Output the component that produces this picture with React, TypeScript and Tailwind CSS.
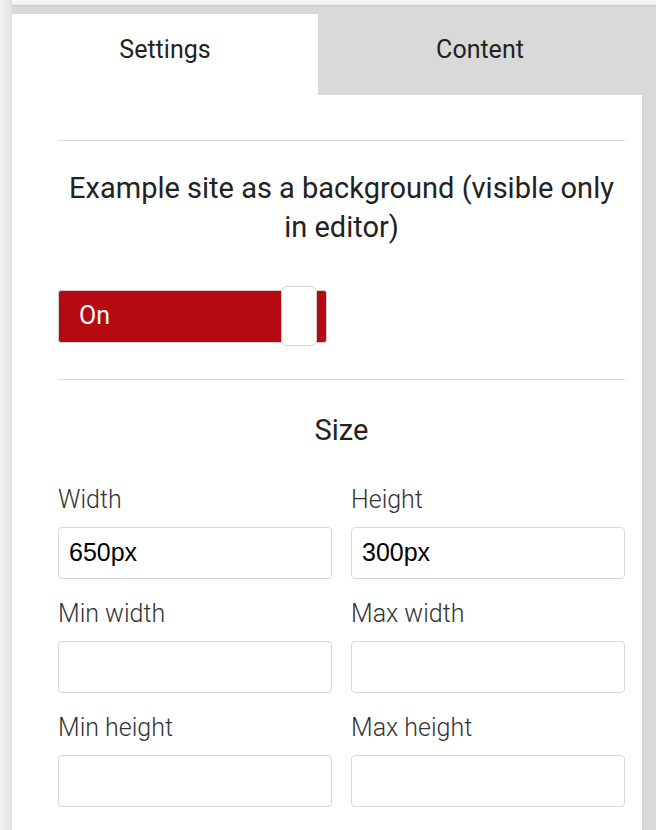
import React from "react";

const roboto = { fontFamily: "Roboto, 'Liberation Sans', sans-serif" };

function Field({ label, value }: { label: string; value?: string }) {
  return (
    <div className="flex flex-col">
      <label className="text-[25px] leading-[30px] text-[#333] font-light">{label}</label>
      <div className="mt-[12px] h-[52px] rounded-[4px] border border-[#d8d8d8] bg-white flex items-center px-[10px]">
        <span className="text-[25px] text-black font-['Liberation_Sans',Arial,sans-serif]">{value}</span>
      </div>
    </div>
  );
}

export default function App() {
  return (
    <div className="w-[656px] h-[830px] flex bg-[#d9d9d9] overflow-hidden" style={roboto}>
      <div className="w-[12px] h-full bg-gradient-to-r from-[#f3f3f3] to-[#e1e1e1]" />
      <div className="flex-1 flex flex-col">
        <div className="h-[14px] flex flex-col">
          <div className="h-[5px] bg-gradient-to-b from-[#fafafa] to-[#ececec] shadow-[0_1px_3px_rgba(0,0,0,0.08)]" />
        </div>
        <div className="h-[81px] flex">
          <div className="w-[306px] bg-white flex items-center justify-center pb-[10px] text-[25px] text-[#222]">
            Settings
          </div>
          <div className="w-[324px] flex items-center justify-center pb-[10px] text-[25px] text-[#222]">
            Content
          </div>
        </div>
        <div className="w-[630px] flex-1 bg-white pl-[46px] pr-[17px] pt-[45px]">
          <div className="border-t border-[#dcdcdc]" />
          <h2 className="mt-[28px] text-center text-[29px] leading-[39px] text-[#222]">
            Example site as a background (visible only in editor)
          </h2>
          <div className="mt-[39px] relative w-[269px] h-[60px] flex items-center">
            <div className="w-full h-[53px] bg-[#b50a12] border border-[#d0d0d0] rounded-[3px] flex items-center pl-[20px]">
              <span className="text-white text-[25px]">On</span>
            </div>
            <div className="absolute left-[223px] top-0 w-[36px] h-[60px] bg-white border border-[#d0d0d0] rounded-[6px]" />
          </div>
          <div className="mt-[33px] border-t border-[#dcdcdc]" />
          <h3 className="mt-[33px] text-center text-[29px] leading-[34px] text-[#222]">Size</h3>
          <div className="mt-[38px] grid grid-cols-2 gap-x-[19px] gap-y-[20px]">
            <Field label="Width" value="650px" />
            <Field label="Height" value="300px" />
            <Field label="Min width" />
            <Field label="Max width" />
            <Field label="Min height" />
            <Field label="Max height" />
          </div>
        </div>
      </div>
    </div>
  );
}
